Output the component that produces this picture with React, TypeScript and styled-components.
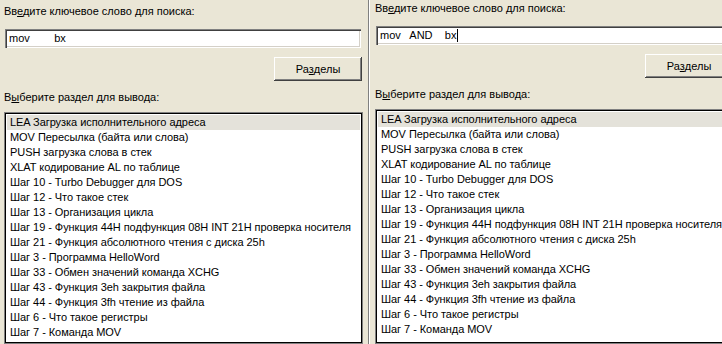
import React from "react";
import styled, { createGlobalStyle } from "styled-components";

const GlobalStyle = createGlobalStyle`
  html, body {
    margin: 0;
    padding: 0;
    background: #eae6d6;
    overflow: hidden;
  }
  body {
    font-family: "Liberation Sans", Arial, sans-serif;
    font-size: 11px;
    color: #000;
  }
`;

const Page = styled.div`
  display: flex;
  width: 722px;
  height: 344px;
  overflow: hidden;
  background: #eae6d6;
`;

const Panel = styled.div<{ $shift: number }>`
  flex: 0 0 368px;
  width: 368px;
  box-sizing: border-box;
  padding: ${(p) => 5 + p.$shift}px 6px 0 4px;
  display: flex;
  flex-direction: column;
`;

const Divider = styled.div`
  flex: 0 0 1px;
  background: #808080;
  border-right: 1px solid #ffffff;
  margin-right: 1px;
`;

const Label = styled.div<{ $gap?: number }>`
  height: 13px;
  line-height: 13px;
  white-space: nowrap;
  margin-top: ${(p) => p.$gap ?? 0}px;
`;

const Mnemonic = styled.span`
  text-decoration: underline;
`;

const Field = styled.div`
  margin: 11px 1px 0 1px;
  height: 19px;
  box-sizing: border-box;
  background: #fff;
  box-shadow: inset 1px 1px 0 #808080, inset 2px 2px 0 #404040,
    inset -1px -1px 0 #ffffff, inset -2px -2px 0 #d4d0c8;
  padding: 0 0 0 4px;
  line-height: 19px;
  white-space: pre;
  display: flex;
  align-items: center;
`;

const Caret = styled.span`
  display: inline-block;
  width: 1px;
  height: 13px;
  background: #000;
  margin-left: 1px;
`;

const ButtonRow = styled.div`
  display: flex;
  justify-content: flex-end;
  margin-top: 9px;
`;

const Button = styled.div`
  width: 88px;
  height: 24px;
  box-sizing: border-box;
  display: flex;
  align-items: center;
  justify-content: center;
  background: #eae6d6;
  box-shadow: inset -1px -1px 0 #404040, inset 1px 1px 0 #ffffff,
    inset -2px -2px 0 #808080;
  padding-bottom: 1px;
`;

const ListBox = styled.div`
  margin-top: 8px;
  margin-right: -1px;
  height: 250px;
  box-sizing: border-box;
  border: 1px solid #808080;
  box-shadow: inset 0 0 0 1px #000;
  background: #fff;
  padding: 2px 2px 0 2px;
  overflow: hidden;
`;

const Row = styled.div<{ $selected?: boolean }>`
  height: 15px;
  line-height: 15px;
  padding-left: 3px;
  white-space: nowrap;
  letter-spacing: -0.05px;
  background: ${(p) => (p.$selected ? "#e4e2da" : "transparent")};
`;

const items = [
  "LEA Загрузка исполнительного адреса",
  "MOV Пересылка (байта или слова)",
  "PUSH загрузка слова в стек",
  "XLAT кодирование AL по таблице",
  "Шаг 10 - Turbo Debugger для DOS",
  "Шаг 12 - Что такое стек",
  "Шаг 13 - Организация цикла",
  "Шаг 19 - Функция 44H подфункция 08H INT 21H проверка носителя",
  "Шаг 21 - Функция абсолютного чтения с диска 25h",
  "Шаг 3 - Программа HelloWord",
  "Шаг 33 - Обмен значений команда XCHG",
  "Шаг 43 - Функция 3eh закрытия файла",
  "Шаг 44 - Функция 3fh чтение из файла",
  "Шаг 6 - Что такое регистры",
  "Шаг 7 - Команда MOV",
];

function SearchPanel({
  query,
  shift,
  caret,
}: {
  query: string;
  shift: number;
  caret?: boolean;
}) {
  return (
    <Panel $shift={shift}>
      <Label>
        Вв<Mnemonic>е</Mnemonic>дите ключевое слово для поиска:
      </Label>
      <Field>
        {query}
        {caret && <Caret />}
      </Field>
      <ButtonRow>
        <Button>
          Ра<Mnemonic>з</Mnemonic>делы
        </Button>
      </ButtonRow>
      <Label $gap={10}>
        В<Mnemonic>ы</Mnemonic>берите раздел для вывода:
      </Label>
      <ListBox>
        {items.map((t, i) => (
          <Row key={i} $selected={i === 0}>
            {t}
          </Row>
        ))}
      </ListBox>
    </Panel>
  );
}

export default function App() {
  return (
    <>
      <GlobalStyle />
      <Page>
        <SearchPanel query={"mov        bx"} shift={0} />
        <Divider />
        <SearchPanel query={"mov   AND    bx"} shift={-3} caret />
      </Page>
    </>
  );
}
